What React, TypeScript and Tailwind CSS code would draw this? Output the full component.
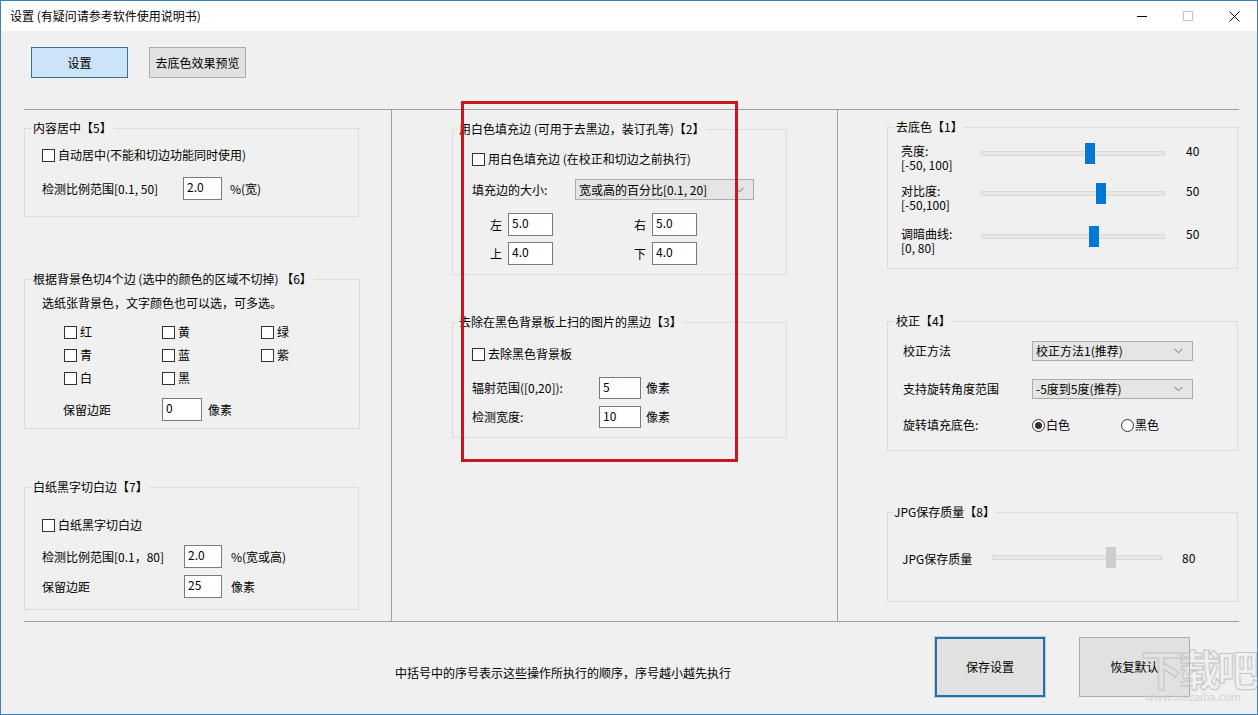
import type { ReactNode } from "react";

function CheckBox({ label, className = "" }: { label: string; className?: string }) {
	return (
		<div className={`flex items-center h-4 ${className}`}>
			<span className="w-[13px] h-[13px] border border-[#333333] bg-white shrink-0" />
			<span className="ml-[3px] whitespace-nowrap">{label}</span>
		</div>
	);
}

function Radio({ label, checked }: { label: string; checked?: boolean }) {
	return (
		<div className="flex items-center h-[14px]">
			<span className="w-[13px] h-[13px] rounded-full border border-[#333333] bg-white flex items-center justify-center shrink-0">
				{checked && <span className="w-[7px] h-[7px] rounded-full bg-[#333333]" />}
			</span>
			<span className="ml-[1px] whitespace-nowrap">{label}</span>
		</div>
	);
}

function TextBox({ value, className = "" }: { value: string; className?: string }) {
	return (
		<div className={`h-full border border-[#7a7a7a] bg-white pl-[3px] leading-[18px] ${className}`}>
			{value}
		</div>
	);
}

function Combo({ value, className = "" }: { value: string; className?: string }) {
	return (
		<div
			className={`flex items-center justify-between border border-[#acacac] bg-[#e5e5e5] pl-[3px] pr-[9px] ${className}`}
		>
			<span className="whitespace-nowrap">{value}</span>
			<svg width="9" height="6" viewBox="0 0 9 6" fill="none">
				<path d="M0.5 0.8 L4.5 4.8 L8.5 0.8" stroke="#6b6b6b" strokeWidth="1" />
			</svg>
		</div>
	);
}

function Group({
	title,
	className = "",
	legendClass = "ml-[7px]",
	children,
}: {
	title: string;
	className?: string;
	legendClass?: string;
	children: ReactNode;
}) {
	return (
		<fieldset className={`border border-[#dcdcdc] ${className}`}>
			<legend className={`px-[1px] leading-4 whitespace-nowrap ${legendClass}`}>{title}</legend>
			{children}
		</fieldset>
	);
}

function Slider({
	width,
	offset,
	thumb = "bg-[#0078d7]",
}: {
	width: string;
	offset: number;
	thumb?: string;
}) {
	return (
		<div className={`relative h-[21px] shrink-0 ${width}`}>
			<div className="absolute left-0 right-0 top-[8px] h-[5px] bg-[#e7e7e7] border border-[#d9d9d9]" />
			<div className={`absolute top-0 w-[10px] h-[21px] ${thumb}`} style={{ left: offset }} />
		</div>
	);
}

function SliderRow({
	label,
	range,
	offset,
	value,
	className = "",
}: {
	label: string;
	range: string;
	offset: number;
	value: string;
	className?: string;
}) {
	return (
		<div className={`flex items-start h-[26px] ${className}`}>
			<div className="w-[80px] leading-[14px]">
				<div>{label}</div>
				<div>{range}</div>
			</div>
			<div className="-mt-[1px]">
				<Slider width="w-[184px]" offset={offset} />
			</div>
			<div className="ml-[21px] leading-[14px]">{value}</div>
		</div>
	);
}

export default function App() {
	return (
		<div className="relative w-[1258px] h-[715px] overflow-hidden border border-[#3a82b8] bg-[#f0f0f0] text-[12px] text-black font-['Noto_Sans_CJK_SC',sans-serif]">
			{/* title bar */}
			<div className="flex items-center h-[30px] bg-white">
				<div className="pl-[9px] whitespace-nowrap">设置 (有疑问请参考软件使用说明书)</div>
				<div className="ml-auto flex">
					<div className="w-[46px] h-[30px] flex items-center justify-center">
						<span className="w-[10px] h-px bg-black" />
					</div>
					<div className="w-[46px] h-[30px] flex items-center justify-center">
						<span className="w-[10px] h-[10px] border border-[#c4c4c4]" />
					</div>
					<div className="w-[46px] h-[30px] flex items-center justify-center">
						<svg width="11" height="11" viewBox="0 0 11 11">
							<path d="M0.5 0.5 L10.5 10.5 M10.5 0.5 L0.5 10.5" stroke="#000" strokeWidth="1" />
						</svg>
					</div>
				</div>
			</div>

			{/* tabs */}
			<div className="flex pl-[30px] pt-[16px] gap-[21px]">
				<div className="w-[97px] h-[31px] flex items-center justify-center bg-[#cce4f7] border border-[#3d6e99]">
					设置
				</div>
				<div className="w-[97px] h-[31px] flex items-center justify-center bg-[#e1e1e1] border border-[#adadad]">
					去底色效果预览
				</div>
			</div>

			{/* main area */}
			<div className="mt-[31px] ml-[23px] w-[1215px] h-[513px] border-y border-[#a0a0a0] flex">
				{/* left column */}
				<div className="w-[368px] border-r border-[#a0a0a0]">
					<Group title="内容居中【5】" className="mt-[10px] h-[97px] w-[335px]">
						<div className="pl-[17px] pt-[11px]">
							<CheckBox label="自动居中(不能和切边功能同时使用)" />
							<div className="mt-[14px] flex items-center h-[23px]">
								<span className="w-[141px]">检测比例范围[0.1, 50]</span>
								<TextBox value="2.0" className="w-[39px]" />
								<span className="ml-[8px]">%(宽)</span>
							</div>
						</div>
					</Group>

					<Group
						title="根据背景色切4个边 (选中的颜色的区域不切掉) 【6】"
						className="mt-[54px] h-[158px] w-[335px]"
					>
						<div className="pl-[17px] pt-[8px] leading-4">选纸张背景色，文字颜色也可以选，可多选。</div>
						<div className="mt-[13px] pl-[39px] grid grid-cols-[98px_99px_98px] gap-y-[7px]">
							<CheckBox label="红" />
							<CheckBox label="黄" />
							<CheckBox label="绿" />
							<CheckBox label="青" />
							<CheckBox label="蓝" />
							<CheckBox label="紫" />
							<CheckBox label="白" />
							<CheckBox label="黑" />
						</div>
						<div className="mt-[12px] pl-[38px] flex items-center h-[23px]">
							<span className="w-[99px]">保留边距</span>
							<TextBox value="0" className="w-[40px]" />
							<span className="ml-[6px]">像素</span>
						</div>
					</Group>

					<Group title="白纸黑字切白边【7】" className="mt-[50px] h-[131px] w-[335px]">
						<div className="pl-[17px] pt-[22px]">
							<CheckBox label="白纸黑字切白边" />
							<div className="mt-[12px] flex items-center h-[23px]">
								<span className="w-[142px]">检测比例范围[0.1，80]</span>
								<TextBox value="2.0" className="w-[38px]" />
								<span className="ml-[9px]">%(宽或高)</span>
							</div>
							<div className="mt-[7px] flex items-center h-[23px]">
								<span className="w-[142px]">保留边距</span>
								<TextBox value="25" className="w-[38px]" />
								<span className="ml-[9px]">像素</span>
							</div>
						</div>
					</Group>
				</div>

				{/* middle column */}
				<div className="w-[446px] border-r border-[#a0a0a0] pl-[60px]">
					<Group
						title="用白色填充边 (可用于去黑边，装订孔等)【2】"
						legendClass="ml-[5px]"
						className="mt-[11px] h-[154px] w-[335px]"
					>
						<div className="pl-[19px] pt-[14px]">
							<CheckBox label="用白色填充边 (在校正和切边之前执行)" />
							<div className="mt-[12px] flex items-center h-[21px]">
								<span className="w-[103px]">填充边的大小:</span>
								<Combo value="宽或高的百分比[0.1, 20]" className="w-[179px] h-[21px]" />
							</div>
							<div className="mt-[13px] flex items-center h-[23px]">
								<span className="ml-[18px] w-[18px]">左</span>
								<TextBox value="5.0" className="w-[45px]" />
								<span className="ml-[81px] w-[18px]">右</span>
								<TextBox value="5.0" className="w-[45px]" />
							</div>
							<div className="mt-[6px] flex items-center h-[23px]">
								<span className="ml-[18px] w-[18px]">上</span>
								<TextBox value="4.0" className="w-[45px]" />
								<span className="ml-[81px] w-[18px]">下</span>
								<TextBox value="4.0" className="w-[45px]" />
							</div>
						</div>
					</Group>

					<Group
						title="去除在黑色背景板上扫的图片的黑边【3】"
						legendClass="ml-[5px]"
						className="mt-[39px] h-[124px] w-[335px]"
					>
						<div className="pl-[19px] pt-[16px]">
							<CheckBox label="去除黑色背景板" />
							<div className="mt-[15px] flex items-center h-[22px]">
								<span className="w-[127px]">辐射范围([0,20]):</span>
								<TextBox value="5" className="w-[42px]" />
								<span className="ml-[5px]">像素</span>
							</div>
							<div className="mt-[7px] flex items-center h-[22px]">
								<span className="w-[127px]">检测宽度:</span>
								<TextBox value="10" className="w-[42px]" />
								<span className="ml-[5px]">像素</span>
							</div>
						</div>
					</Group>
				</div>

				{/* right column */}
				<div className="flex-1 pl-[49px]">
					<Group title="去底色【1】" className="mt-[9px] h-[150px] w-[351px]">
						<div className="pl-[13px] pt-[9px]">
							<SliderRow label="亮度:" range="[-50, 100]" offset={104} value="40" />
							<SliderRow
								label="对比度:"
								range="[-50,100]"
								offset={115}
								value="50"
								className="mt-[14px]"
							/>
							<SliderRow
								label="调暗曲线:"
								range="[0, 80]"
								offset={108}
								value="50"
								className="mt-[17px]"
							/>
						</div>
					</Group>

					<Group title="校正【4】" className="mt-[44px] h-[138px] w-[351px]">
						<div className="pl-[15px] pt-[12px]">
							<div className="flex items-center h-[20px]">
								<span className="w-[129px]">校正方法</span>
								<Combo value="校正方法1(推荐)" className="w-[161px] h-[20px]" />
							</div>
							<div className="mt-[18px] flex items-center h-[20px]">
								<span className="w-[129px]">支持旋转角度范围</span>
								<Combo value="-5度到5度(推荐)" className="w-[161px] h-[20px]" />
							</div>
							<div className="mt-[19px] flex items-center h-[14px]">
								<span className="w-[129px]">旋转填充底色:</span>
								<div className="w-[89px]">
									<Radio label="白色" checked />
								</div>
								<Radio label="黑色" />
							</div>
						</div>
					</Group>

					<Group title="JPG保存质量【8】" legendClass="ml-[5px]" className="mt-[53px] h-[98px] w-[351px]">
						<div className="pl-[14px] pt-[27px] flex items-center h-[48px]">
							<span className="w-[90px] mt-[2px]">JPG保存质量</span>
							<Slider width="w-[170px]" offset={114} thumb="bg-[#cdcdcd]" />
							<span className="ml-[20px]">80</span>
						</div>
					</Group>
				</div>
			</div>

			{/* bottom area */}
			<div className="flex">
				<div className="w-[934px] pl-[394px] pt-[43px] leading-4 whitespace-nowrap">
					中括号中的序号表示这些操作所执行的顺序，序号越小越先执行
				</div>
				<div className="pt-[15px] flex">
					<div className="w-[110px] h-[60px] flex items-center justify-center bg-[#e1e1e1] border-2 border-[#2f6f9f] shadow-[0_0_0_1px_#a8d4f2]">
						保存设置
					</div>
					<div className="ml-[34px] w-[111px] h-[60px] flex items-center justify-center bg-[#e1e1e1] border border-[#adadad]">
						恢复默认
					</div>
				</div>
			</div>

			{/* red annotation frame */}
			<div className="absolute left-[460px] top-[100px] w-[277px] h-[361px] border-[3px] border-[#c8171e]" />

			{/* watermark */}
			<div className="absolute left-[1140px] top-[646px] pointer-events-none">
				<div className="text-[42px] leading-none font-bold tracking-[-4px] text-transparent [-webkit-text-stroke:1px_#c4c4c4] whitespace-nowrap">
					下载吧
				</div>
				<div className="mt-[2px] ml-[4px] text-[11px] leading-none text-[#d4d4d4] whitespace-nowrap">
					www.xiazaiba.com
				</div>
			</div>
		</div>
	);
}
